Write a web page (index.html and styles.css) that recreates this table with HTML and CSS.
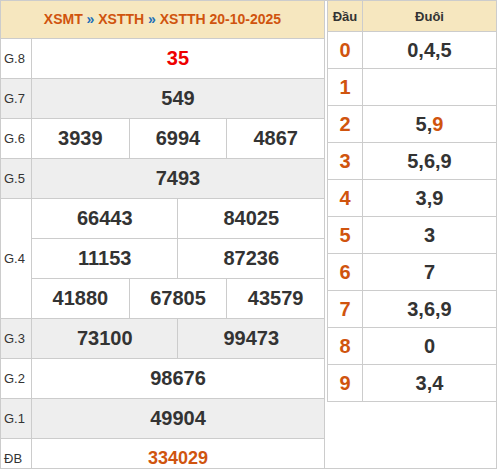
FILE: index.html
```html
<!DOCTYPE html>
<html lang="vi">
<head>
<meta charset="utf-8">
<title>XSTTH 20-10-2025</title>
<link rel="stylesheet" href="styles.css">
</head>
<body>
<div class="frame">
  <div class="results">
    <div class="cell head span7"><span class="title">XSMT <span class="sep">»</span> XSTTH <span class="sep">»</span> XSTTH 20-10-2025</span></div>

    <div class="cell label">G.8</div>
    <div class="cell num span6 red">35</div>

    <div class="cell label gray">G.7</div>
    <div class="cell num span6 gray">549</div>

    <div class="cell label">G.6</div>
    <div class="cell num span2">3939</div>
    <div class="cell num span2">6994</div>
    <div class="cell num span2">4867</div>

    <div class="cell label gray">G.5</div>
    <div class="cell num span6 gray">7493</div>

    <div class="cell label rows3">G.4</div>
    <div class="cell num span3">66443</div>
    <div class="cell num span3">84025</div>
    <div class="cell num span3">11153</div>
    <div class="cell num span3">87236</div>
    <div class="cell num span2">41880</div>
    <div class="cell num span2">67805</div>
    <div class="cell num span2">43579</div>

    <div class="cell label gray">G.3</div>
    <div class="cell num span3 gray">73100</div>
    <div class="cell num span3 gray">99473</div>

    <div class="cell label">G.2</div>
    <div class="cell num span6">98676</div>

    <div class="cell label gray">G.1</div>
    <div class="cell num span6 gray">49904</div>

    <div class="cell label">ĐB</div>
    <div class="cell num span6 special">334029</div>
  </div>

  <div class="loto">
    <div class="lcell lhead">Đầu</div>
    <div class="lcell lhead">Đuôi</div>

    <div class="lcell dau">0</div><div class="lcell duoi">0,4,5</div>
    <div class="lcell dau">1</div><div class="lcell duoi"></div>
    <div class="lcell dau">2</div><div class="lcell duoi">5,<span class="hl">9</span></div>
    <div class="lcell dau">3</div><div class="lcell duoi">5,6,9</div>
    <div class="lcell dau">4</div><div class="lcell duoi">3,9</div>
    <div class="lcell dau">5</div><div class="lcell duoi">3</div>
    <div class="lcell dau">6</div><div class="lcell duoi">7</div>
    <div class="lcell dau">7</div><div class="lcell duoi">3,6,9</div>
    <div class="lcell dau">8</div><div class="lcell duoi">0</div>
    <div class="lcell dau">9</div><div class="lcell duoi">3,4</div>
  </div>
</div>
</body>
</html>
```

FILE: styles.css
```css
* { box-sizing: border-box; }

html, body {
  margin: 0;
  padding: 0;
  background: #ffffff;
}

body {
  font-family: "Liberation Sans", Arial, sans-serif;
  color: #333333;
}

.frame {
  width: 497px;
  height: 469px;
  border: 1px solid #cccccc;
  display: flex;
  align-items: flex-start;
  overflow: hidden;
}

.results {
  width: 324px;
  flex: none;
  display: grid;
  grid-template-columns: 31px repeat(6, 1fr);
  grid-template-rows: 38px;
  grid-auto-rows: 40px;
}

.cell {
  border-right: 1px solid #cccccc;
  border-bottom: 1px solid #cccccc;
  display: flex;
  align-items: center;
  justify-content: center;
}

.head {
  background: #f6e7bf;
  font-size: 14px;
  font-weight: bold;
  color: #d0540e;
  padding-bottom: 1px;
}

.head .sep { color: #1d6fb8; }

.span7 { grid-column: span 7; }
.span6 { grid-column: span 6; }
.span3 { grid-column: span 3; }
.span2 { grid-column: span 2; }
.rows3 { grid-row: span 3; }

.label {
  justify-content: flex-start;
  padding-left: 3px;
  font-size: 13px;
  color: #333333;
}

.num {
  font-size: 20px;
  font-weight: bold;
  color: #333333;
}

.gray { background: #eeeeee; }

.red { color: #ee0000; }
.special { color: #d0540e; font-size: 18px; }

.loto {
  flex: 1;
  margin-left: 2px;
  border-left: 1px solid #cccccc;
  display: grid;
  grid-template-columns: 35px 1fr;
  grid-template-rows: 31px;
  grid-auto-rows: 37px;
}

.lcell {
  border-bottom: 1px solid #cccccc;
  display: flex;
  align-items: center;
  justify-content: center;
}

.lcell:nth-child(odd) { border-right: 1px solid #cccccc; }

.lhead {
  background: #f6e7bf;
  font-size: 13px;
  font-weight: bold;
  color: #333333;
}

.dau {
  font-size: 20px;
  font-weight: bold;
  color: #d0540e;
}

.duoi {
  font-size: 20px;
  font-weight: bold;
  color: #333333;
}

.hl { color: #d0540e; }
```
